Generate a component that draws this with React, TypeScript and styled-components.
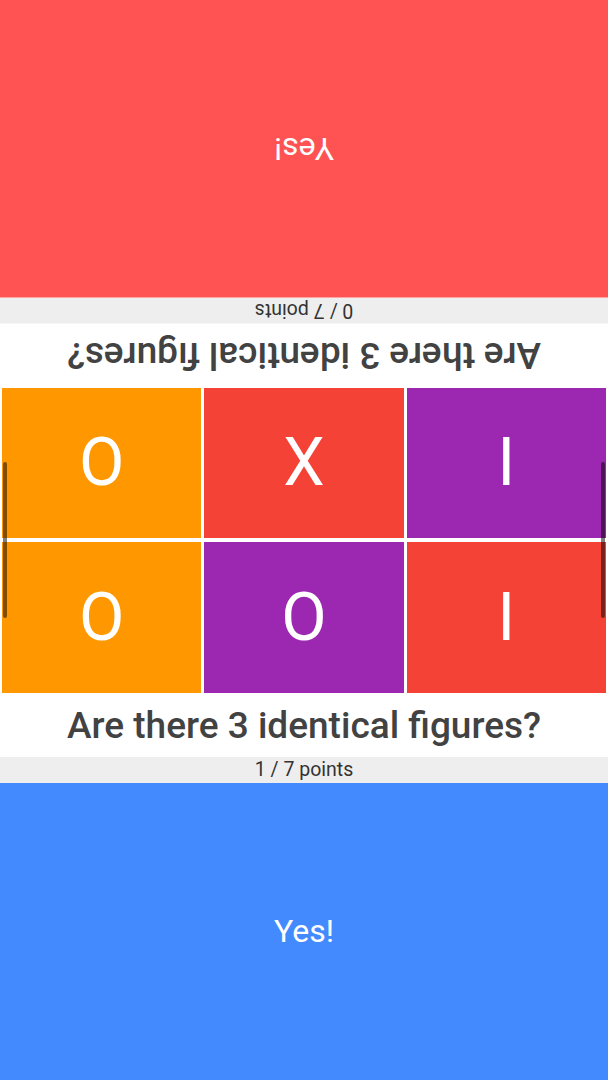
import styled, { createGlobalStyle } from 'styled-components';

const GlobalStyle = createGlobalStyle`
  html, body {
    margin: 0;
    padding: 0;
    height: 100%;
    background: #ffffff;
    font-family: Roboto, "Noto Sans", Arial, sans-serif;
  }
  #root {
    height: 100%;
  }
`;

const Screen = styled.div`
  position: relative;
  height: 100vh;
  display: flex;
  flex-direction: column;
  overflow: hidden;
`;

const PlayerSide = styled.div<{ $flipped: boolean }>`
  flex: 1;
  display: flex;
  flex-direction: column;
  transform: ${(p) => (p.$flipped ? 'rotate(180deg)' : 'none')};
`;

const Question = styled.div`
  height: 63px;
  display: flex;
  align-items: center;
  justify-content: center;
  background: #ffffff;
  color: #424242;
  font-size: 37px;
  font-weight: 500;
  flex-shrink: 0;
`;

const Points = styled.div`
  height: 26px;
  display: flex;
  align-items: center;
  justify-content: center;
  background: #eeeeee;
  color: #333333;
  font-size: 19.5px;
  flex-shrink: 0;
`;

const AnswerButton = styled.button<{ $color: string }>`
  flex: 1;
  border: none;
  margin: 0;
  background: ${(p) => p.$color};
  color: #ffffff;
  font-family: inherit;
  font-size: 32px;
  display: flex;
  align-items: center;
  justify-content: center;
  cursor: pointer;
`;

const Board = styled.div`
  height: 307px;
  flex-shrink: 0;
  display: grid;
  grid-template-columns: repeat(3, 1fr);
  grid-template-rows: repeat(2, 1fr);
  gap: 4px 3px;
  padding: 1px 2px 1px 2px;
  box-sizing: border-box;
  background: #ffffff;
`;

const Cell = styled.div<{ $color: string }>`
  background: ${(p) => p.$color};
  color: #ffffff;
  font-size: 66px;
  font-weight: 400;
  display: flex;
  align-items: center;
  justify-content: center;
`;

const EdgeHandle = styled.div<{ $side: 'left' | 'right' }>`
  position: absolute;
  top: 462px;
  ${(p) => (p.$side === 'left' ? 'left: 3px;' : 'right: 3px;')}
  width: 4px;
  height: 156px;
  border-radius: 2px;
  background: rgba(0, 0, 0, 0.5);
`;

const COLORS = {
  orange: '#ff9800',
  red: '#f44336',
  purple: '#9c27b0',
};

const CELLS = [
  { figure: 'O', color: COLORS.orange },
  { figure: 'X', color: COLORS.red },
  { figure: 'I', color: COLORS.purple },
  { figure: 'O', color: COLORS.orange },
  { figure: 'O', color: COLORS.purple },
  { figure: 'I', color: COLORS.red },
];

interface PlayerProps {
  flipped: boolean;
  score: number;
  color: string;
}

function Player({ flipped, score, color }: PlayerProps) {
  return (
    <PlayerSide $flipped={flipped}>
      <Question>Are there 3 identical figures?</Question>
      <Points>{score} / 7 points</Points>
      <AnswerButton $color={color}>Yes!</AnswerButton>
    </PlayerSide>
  );
}

export default function App() {
  return (
    <>
      <GlobalStyle />
      <Screen>
        <Player flipped score={0} color="#ff5252" />
        <Board>
          {CELLS.map((c, i) => (
            <Cell key={i} $color={c.color}>
              {c.figure}
            </Cell>
          ))}
        </Board>
        <Player flipped={false} score={1} color="#448aff" />
        <EdgeHandle $side="left" />
        <EdgeHandle $side="right" />
      </Screen>
    </>
  );
}
